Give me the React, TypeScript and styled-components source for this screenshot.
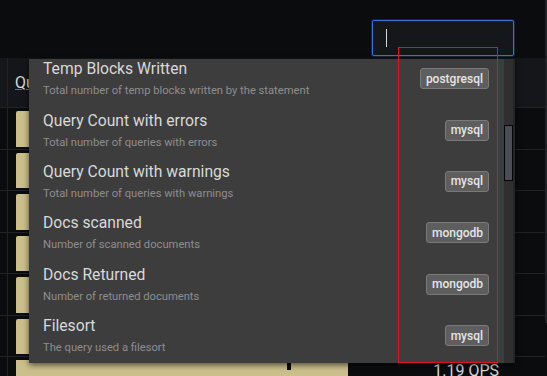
import React from 'react';
import styled, { createGlobalStyle } from 'styled-components';

const GlobalStyle = createGlobalStyle`
  html, body {
    margin: 0;
    padding: 0;
    background: #0b0c0e;
    overflow: hidden;
  }
  * { box-sizing: border-box; }
`;

const metrics = [
  { name: 'Temp Blocks Written', desc: 'Total number of temp blocks written by the statement', db: 'postgresql' },
  { name: 'Query Count with errors', desc: 'Total number of queries with errors', db: 'mysql' },
  { name: 'Query Count with warnings', desc: 'Total number of queries with warnings', db: 'mysql' },
  { name: 'Docs scanned', desc: 'Number of scanned documents', db: 'mongodb' },
  { name: 'Docs Returned', desc: 'Number of returned documents', db: 'mongodb' },
  { name: 'Filesort', desc: 'The query used a filesort', db: 'mysql' },
];

const Page = styled.div`
  position: relative;
  width: 547px;
  height: 376px;
  display: flex;
  background: #0b0c0e;
  font-family: Roboto, 'Liberation Sans', sans-serif;
  overflow: hidden;
`;

const Main = styled.div`
  width: 545px;
  display: flex;
  flex-direction: column;
`;

const Rail = styled.div`
  width: 2px;
  height: 323px;
  background: #1f2125;
`;

const TopBar = styled.div`
  flex-shrink: 0;
  height: 58px;
  display: flex;
  justify-content: flex-end;
  padding: 20px 31px 0 0;
`;

const SearchInput = styled.div`
  width: 142px;
  height: 36px;
  border: 1px solid #3274d9;
  border-radius: 2px;
  background: #15171b;
  box-shadow: 0 0 0 1px rgba(50, 116, 217, 0.25);
  padding: 8px 0 0 13px;
`;

const Caret = styled.div`
  width: 1px;
  height: 18px;
  background: #d8d9da;
`;

const HeaderRow = styled.div`
  flex-shrink: 0;
  height: 50px;
  display: flex;
  background: #141619;
  border-bottom: 1px solid #202226;
`;

const Row = styled.div`
  flex-shrink: 0;
  height: 41.5px;
  display: flex;
  border-bottom: 1px solid #202226;
`;

const IndexCell = styled.div`
  width: 8px;
  border-right: 1px solid #202226;
`;

const HeaderCell = styled.div`
  flex: 1;
  padding: 15px 0 0 7px;
  font-size: 16px;
  color: #d8d9da;
`;

const SortLink = styled.span`
  text-decoration: underline;
  text-decoration-color: #3274d9;
`;

const BarCell = styled.div`
  width: 340px;
  padding: 3px 0 2px 8px;
`;

const Bar = styled.div<{ $notch?: boolean }>`
  position: relative;
  height: 100%;
  background: #cbbf8b;
  border-top-left-radius: ${(p) => (p.$notch ? '0' : '2px')};

  &::after {
    content: '';
    display: ${(p) => (p.$notch ? 'block' : 'none')};
    position: absolute;
    left: 271px;
    top: 0;
    width: 4px;
    height: 10px;
    background: #0b0c0e;
  }
`;

const ValueCell = styled.div`
  flex: 1;
  display: flex;
  justify-content: flex-end;
  padding: 4px 46px 0 0;
  font-size: 16px;
  color: #d8d9da;
`;

const Dropdown = styled.div`
  position: absolute;
  left: 29px;
  top: 59px;
  width: 486px;
  height: 304px;
  display: flex;
  background: #3d3d3d;
  box-shadow: 0 2px 6px rgba(0, 0, 0, 0.6);
`;

const List = styled.div`
  flex: 1;
  overflow: hidden;
`;

const ListInner = styled.div`
  margin-top: -6px;
`;

const Item = styled.div`
  height: 51.4px;
  display: flex;
  align-items: center;
  padding: 0 15px 0 14px;
`;

const ItemText = styled.div`
  flex: 1;
  display: flex;
  flex-direction: column;
  gap: 6px;
`;

const ItemTitle = styled.div`
  font-size: 15.7px;
  line-height: 18px;
  color: #d8d9da;
`;

const ItemDesc = styled.div`
  font-size: 11.2px;
  line-height: 13px;
  color: #8e8e8e;
`;

const Badge = styled.span`
  height: 21px;
  display: inline-flex;
  align-items: center;
  padding: 0 5px;
  border: 1px solid #7a7a7a;
  border-radius: 3px;
  background: #5e5e5e;
  color: #e6e6e6;
  font-size: 12px;
  font-weight: 500;
`;

const Track = styled.div`
  width: 11px;
  padding-top: 66px;
  background: #2f2f2f;
  border-right: 2px solid #262626;
`;

const Thumb = styled.div`
  width: 9px;
  height: 56px;
  background: #4a4c58;
  border: 1px solid #050505;
`;

const Annotation = styled.div`
  position: absolute;
  left: 398px;
  top: 47px;
  width: 100px;
  height: 316px;
  border: 1px solid #e3131b;
  pointer-events: none;
`;

export default function App() {
  return (
    <>
      <GlobalStyle />
      <Page>
        <Main>
          <TopBar>
            <SearchInput>
              <Caret />
            </SearchInput>
          </TopBar>
          <HeaderRow>
            <IndexCell />
            <HeaderCell>
              <SortLink>Query</SortLink>
            </HeaderCell>
          </HeaderRow>
          {[0, 1, 2, 3, 4, 5].map((i) => (
            <Row key={i}>
              <IndexCell />
              <BarCell>
                <Bar />
              </BarCell>
            </Row>
          ))}
          <Row>
            <IndexCell />
            <BarCell>
              <Bar $notch />
            </BarCell>
            <ValueCell>1.19 QPS</ValueCell>
          </Row>
        </Main>
        <Rail />

        <Dropdown>
          <List>
            <ListInner>
              {metrics.map((m) => (
                <Item key={m.name}>
                  <ItemText>
                    <ItemTitle>{m.name}</ItemTitle>
                    <ItemDesc>{m.desc}</ItemDesc>
                  </ItemText>
                  <Badge>{m.db}</Badge>
                </Item>
              ))}
            </ListInner>
          </List>
          <Track>
            <Thumb />
          </Track>
        </Dropdown>

        <Annotation />
      </Page>
    </>
  );
}
